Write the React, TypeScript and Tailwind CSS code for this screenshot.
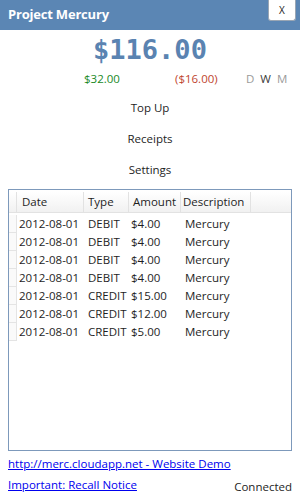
const rows = [
  { date: '2012-08-01', type: 'DEBIT', amount: '$4.00', desc: 'Mercury' },
  { date: '2012-08-01', type: 'DEBIT', amount: '$4.00', desc: 'Mercury' },
  { date: '2012-08-01', type: 'DEBIT', amount: '$4.00', desc: 'Mercury' },
  { date: '2012-08-01', type: 'DEBIT', amount: '$4.00', desc: 'Mercury' },
  { date: '2012-08-01', type: 'CREDIT', amount: '$15.00', desc: 'Mercury' },
  { date: '2012-08-01', type: 'CREDIT', amount: '$12.00', desc: 'Mercury' },
  { date: '2012-08-01', type: 'CREDIT', amount: '$5.00', desc: 'Mercury' },
]

// row header | Date | Type | Amount | Description | filler
const cols = 'grid grid-cols-[8px_67px_45px_52px_70px_1fr]'

export default function App() {
  return (
    <div className="w-[300px] h-[500px] bg-white flex flex-col text-[11.5px] text-[#1e1e1e] font-['Open_Sans',sans-serif] overflow-hidden">
      {/* title bar */}
      <div className="relative h-[30px] shrink-0 bg-[#5b86b4] flex items-center pl-2">
        <span className="text-white font-bold text-[13px] tracking-[-0.2px]">Project Mercury</span>
        <button className="absolute right-[4px] top-0 w-[28px] h-[21px] bg-white border border-t-0 border-[#9aa6b4] rounded-b-[3px] text-[10px] leading-none text-[#222]">
          X
        </button>
      </div>

      {/* balance */}
      <div className="flex justify-center items-center h-[40px]">
        <span className="font-['DejaVu_Sans_Mono',monospace] font-bold text-[27px] leading-[36px] text-[#5a83b1]">$116.00</span>
      </div>
      <div className="relative h-[18px] leading-[18px]">
        <span className="absolute left-[84px] top-0 text-[#21891f]">$32.00</span>
        <span className="absolute left-[175px] top-0 text-[#c0452f]">($16.00)</span>
        <div className="absolute left-[246px] top-0 flex gap-[6px]">
          <span className="text-[#9a9a9a]">D</span>
          <span className="text-[#3a3a3a]">W</span>
          <span className="text-[#9a9a9a]">M</span>
        </div>
      </div>

      {/* actions */}
      <div className="flex flex-col items-center pt-[4px]">
        <button className="h-[31px]">Top Up</button>
        <button className="h-[31px]">Receipts</button>
        <button className="h-[31px]">Settings</button>
      </div>

      {/* grid */}
      <div className="mx-[8px] mt-[4px] h-[262px] border border-[#7d99bb] pt-[2px] flex flex-col">
        <div className={`${cols} h-[21px] bg-gradient-to-b from-white to-[#f1f1f1] border-b border-[#e2e2e2]`}>
          <div className="border-r border-[#e2e2e2]" />
          <div className="border-r border-[#e2e2e2] pl-[5px] leading-[20px]">Date</div>
          <div className="border-r border-[#e2e2e2] pl-[4px] leading-[20px]">Type</div>
          <div className="border-r border-[#e2e2e2] pl-[4px] leading-[20px]">Amount</div>
          <div className="border-r border-[#e2e2e2] pl-[2px] leading-[20px]">Description</div>
          <div />
        </div>
        <div className="pt-[2px]">
          {rows.map((r, i) => (
            <div key={i} className={`${cols} h-[18px] leading-[18px]`}>
              <div className="border-r border-b border-[#e4e4e4] bg-[#fafafa]" />
              <div className="pl-[2px] whitespace-nowrap">{r.date}</div>
              <div className="pl-[4px]">{r.type}</div>
              <div className="pl-[2px]">{r.amount}</div>
              <div className="pl-[4px]">{r.desc}</div>
              <div />
            </div>
          ))}
        </div>
      </div>

      {/* footer */}
      <div className="px-[8px] pt-[2px] flex flex-col">
        <a href="#" className="text-[#0000ee] underline leading-[21px] w-fit">http://merc.cloudapp.net - Website Demo</a>
        <div className="flex justify-between items-end">
          <a href="#" className="text-[#0000ee] underline leading-[21px]">Important: Recall Notice</a>
          <span className="leading-[21px] -mb-[2px]">Connected</span>
        </div>
      </div>
    </div>
  )
}
